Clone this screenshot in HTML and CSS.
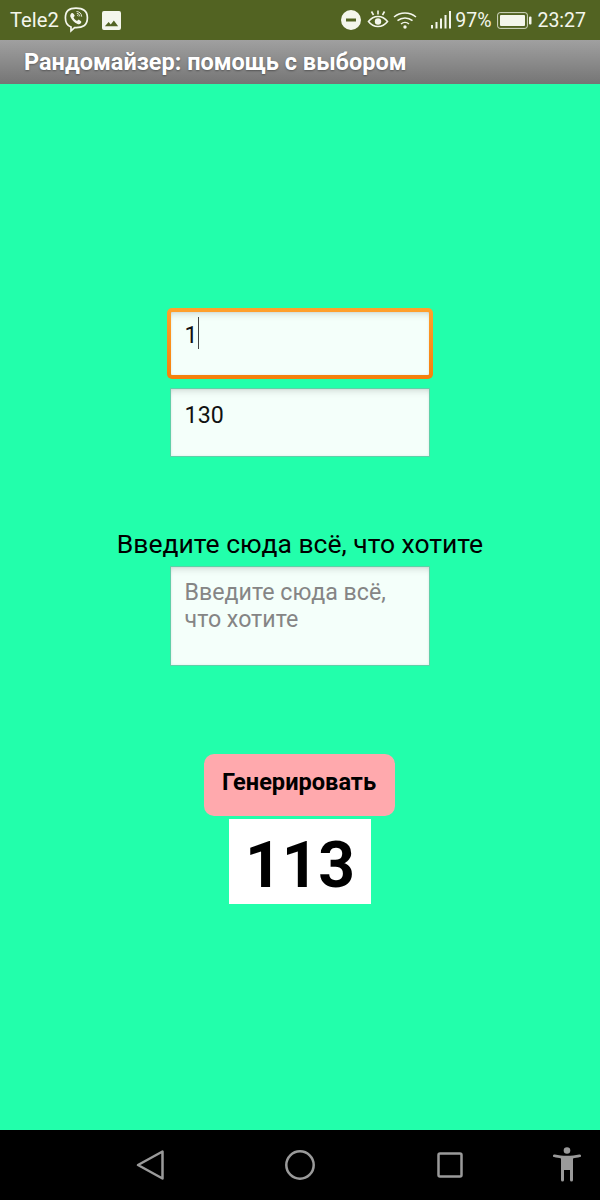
FILE: index.html
```html
<!DOCTYPE html>
<html lang="ru">
<head>
<meta charset="utf-8">
<title>Рандомайзер</title>
<link rel="stylesheet" href="styles.css">
</head>
<body>
<div class="phone">
  <header class="status">
    <div class="status-left">
      <span class="carrier">Tele2</span>
      <svg class="ic-viber" viewBox="0 0 26 28" width="26" height="28" fill="none" stroke="#f4f6ec">
        <path stroke-width="1.7" d="M13 2.200c-6.600 0-10.600 2.200-10.600 9.600 0 5 1.600 8 5.600 9.200v3.800l3.600-3.300c8 .4 12.800-1.800 12.800-9.700 0-7.400-4.800-9.600-11.400-9.600z"/>
        <path fill="#f4f6ec" stroke="none" d="M8.200 7.400c1-.8 1.700-.6 2.300.3l.9 1.400c.4.700.2 1.200-.3 1.600l-.6.500c.6 1.700 1.900 3 3.600 3.700l.6-.7c.4-.5 1-.6 1.600-.2l1.400 1c.8.600.9 1.300.1 2.200-.9 1-2 1.200-3.200.7-3.500-1.500-5.800-3.800-7.200-7.200-.4-1.100 0-2.400.8-3.300z"/>
        <path stroke-width=".9" d="M13.500 5.500c3.200.2 5 2 5.200 5.200M13.800 7.400c1.900.1 2.900 1.200 3 3M14.100 9.100c.7.100 1.100.5 1.200 1.200"/>
      </svg>
      <svg class="ic-image" viewBox="0 0 20 20" width="19" height="19">
        <path fill="#f4f6ec" fill-rule="evenodd" d="M2 0h16a2 2 0 0 1 2 2v16a2 2 0 0 1-2 2H2a2 2 0 0 1-2-2V2a2 2 0 0 1 2-2zM3 16h14l-4.500-6-3.300 4.200-2.200-2.700z"/>
      </svg>
    </div>
    <div class="status-right">
      <svg class="ic-dnd" viewBox="0 0 20 20" width="20" height="20">
        <path fill="#f4f6ec" fill-rule="evenodd" d="M10 0a10 10 0 1 1 0 20a10 10 0 0 1 0-20zM5 8.500v3h10v-3z"/>
      </svg>
      <svg class="ic-eye" viewBox="0 0 22 20" width="22" height="20" fill="none" stroke="#f4f6ec" stroke-width="1.600">
        <path d="M1.500 11.500c2.500-3.300 5.600-5 9.500-5s7 1.700 9.500 5c-2.500 3.300-5.600 5-9.500 5s-7-1.700-9.500-5z"/>
        <circle cx="11" cy="11.500" r="3.200" fill="#f4f6ec" stroke="none"/>
        <path d="M4.500 1.500l2 3.500M11 .5v4M17.500 1.500l-2 3.500"/>
      </svg>
      <svg class="ic-wifi" viewBox="0 0 24 18" width="24" height="18" fill="none" stroke="#f4f6ec" stroke-width="1.500">
        <path d="M1 6c6.300-5.300 15.700-5.300 22 0M4.500 9.700c4.300-3.600 10.700-3.600 15 0M8 13c2.300-1.900 5.700-1.900 8 0"/>
        <circle cx="12" cy="16" r="1.700" fill="#f4f6ec" stroke="none"/>
      </svg>
      <svg class="ic-signal" viewBox="0 0 20 18" width="20" height="18" fill="#f4f6ec">
        <rect x="0" y="14" width="2" height="3.500"/>
        <rect x="4.500" y="11" width="2" height="6.500"/>
        <rect x="9" y="7.500" width="2" height="10"/>
        <rect x="13.500" y="4" width="2" height="13.500"/>
        <rect x="18" y="0" width="2" height="17.500"/>
      </svg>
      <span class="pct">97%</span>
      <svg class="ic-battery" viewBox="0 0 35 17" width="35" height="17">
        <rect x=".6" y=".6" width="29.800" height="15.800" rx="2.500" fill="none" stroke="#f4f6ec" stroke-width="1" opacity=".8"/>
        <rect x="3" y="3" width="25" height="11" rx="1" fill="#f4f6ec"/>
        <rect x="32" y="4.500" width="2.500" height="8" rx="1" fill="#f4f6ec"/>
      </svg>
      <span class="clock">23:27</span>
    </div>
  </header>

  <div class="titlebar">Рандомайзер: помощь с выбором</div>

  <main class="screen">
    <div class="field field-focus"><span>1</span><i class="caret"></i></div>
    <div class="field field-plain">130</div>
    <p class="prompt">Введите сюда всё, что хотите</p>
    <div class="field field-area">Введите сюда всё, что хотите</div>
    <button class="generate" type="button">Генерировать</button>
    <output class="result">113</output>
  </main>

  <nav class="navbar">
    <svg class="nav-back" viewBox="0 0 28 32" width="28" height="32" fill="none" stroke="#9a9a9a" stroke-width="2.500" stroke-linejoin="round">
      <path d="M26.500 2.500v27L2 16z"/>
    </svg>
    <svg class="nav-home" viewBox="0 0 32 32" width="32" height="32" fill="none" stroke="#9a9a9a" stroke-width="2.500">
      <circle cx="16" cy="16" r="13.700"/>
    </svg>
    <svg class="nav-recent" viewBox="0 0 28 28" width="28" height="28" fill="none" stroke="#9a9a9a" stroke-width="2.500" stroke-linejoin="round">
      <rect x="2.500" y="2.500" width="23" height="23" rx="1.500"/>
    </svg>
    <svg class="nav-access" viewBox="0 0 30 36" width="30" height="36" fill="#9a9a9a">
      <circle cx="15" cy="3.500" r="3.300"/>
      <path d="M1 8.500c.2-.9.900-1.200 1.800-1 3.800.9 8 1.300 12.200 1.300s8.400-.4 12.200-1.300c.9-.2 1.600.1 1.800 1 .2.800-.2 1.400-1 1.600-2.500.7-5 1.100-7 1.300v21.700a1.500 1.500 0 0 1-3 0V23h-6v10.100a1.500 1.500 0 0 1-3 0V11.400c-2-.2-4.500-.6-7-1.300-.8-.2-1.200-.8-1-1.600z"/>
      <rect x="14.200" y="23" width="1.600" height="12" fill="#000"/>
    </svg>
  </nav>
</div>
</body>
</html>
```
FILE: styles.css
```css
* { box-sizing: border-box; }
html, body { margin: 0; padding: 0; }
body { font-family: Roboto, "Noto Sans", sans-serif; background: #000; }

.phone {
  width: 600px;
  height: 1200px;
  display: flex;
  flex-direction: column;
  overflow: hidden;
}

.status {
  height: 40px;
  flex: none;
  background: #526322;
  color: #f4f6ec;
  display: flex;
  justify-content: space-between;
  align-items: center;
  padding: 0 14px 0 10px;
  font-size: 19.5px;
}
.carrier { font-size: 20.2px; }
.status-left, .status-right { display: flex; align-items: center; }
.ic-viber { margin-left: 4px; }
.ic-image { margin-left: 13px; }
.ic-dnd { margin-right: 6px; }
.ic-eye { margin-right: 4px; }
.ic-wifi { margin-right: 14px; }
.ic-signal { margin-right: 4px; }
.pct { margin-right: 6px; }
.ic-battery { margin-right: 5px; }

.titlebar {
  height: 44px;
  flex: none;
  background: linear-gradient(#a0a0a0, #757575);
  color: #fff;
  font-size: 23.5px;
  font-weight: 700;
  line-height: 44px;
  padding-left: 24px;
  text-shadow: 0 1px 2px rgba(0, 0, 0, .35);
}

.screen {
  flex: 1;
  background: #22ffab;
  display: flex;
  flex-direction: column;
  align-items: center;
  padding-top: 224px;
}

.field {
  width: 260px;
  background: #f4fffa;
  color: #111;
  font-size: 23.2px;
  line-height: 28px;
  padding: 12px 13.6px;
  border: 1px solid #5fd0a8;
  box-shadow: inset 0 7px 7px -5px rgba(0, 0, 0, .14), inset 0 0 3px rgba(0, 0, 0, .08);
}
.field-focus {
  width: 266px;
  height: 71px;
  display: flex;
  align-items: flex-start;
  padding: 9px 13.6px;
  border: 4px solid transparent;
  border-radius: 5px;
  background: linear-gradient(#f4fffa, #f4fffa) padding-box, linear-gradient(#ffa02e, #f57f0b) border-box;
}
.caret {
  display: block;
  width: 1.3px;
  height: 32px;
  margin: -4px 0 0 0;
  background: #444;
}
.field-plain { height: 69px; margin-top: 9px; }
.field-area { height: 100px; color: #858585; line-height: 27px; }

.prompt {
  margin: 72px 0 0;
  height: 37px;
  font-size: 26.5px;
  line-height: 30px;
  color: #000;
  white-space: nowrap;
}

.generate {
  display: block;
  margin: 88px 2px 0 0;
  width: 191px;
  height: 62px;
  padding: 0 0 6px;
  border: 0;
  border-radius: 10px;
  background: #ffa9ad;
  color: #000;
  font: 700 23.6px Roboto, sans-serif;
}

.result {
  display: block;
  margin-top: 3px;
  width: 142px;
  height: 85px;
  background: #fff;
  color: #000;
  font-size: 64px;
  font-weight: 700;
  line-height: 93px;
  text-align: center;
}

.navbar {
  height: 70px;
  flex: none;
  background: #000;
  display: flex;
  align-items: center;
  padding-left: 136px;
}
.nav-back, .nav-home { margin-right: 120px; }
.nav-recent { margin-right: 88px; }
```
